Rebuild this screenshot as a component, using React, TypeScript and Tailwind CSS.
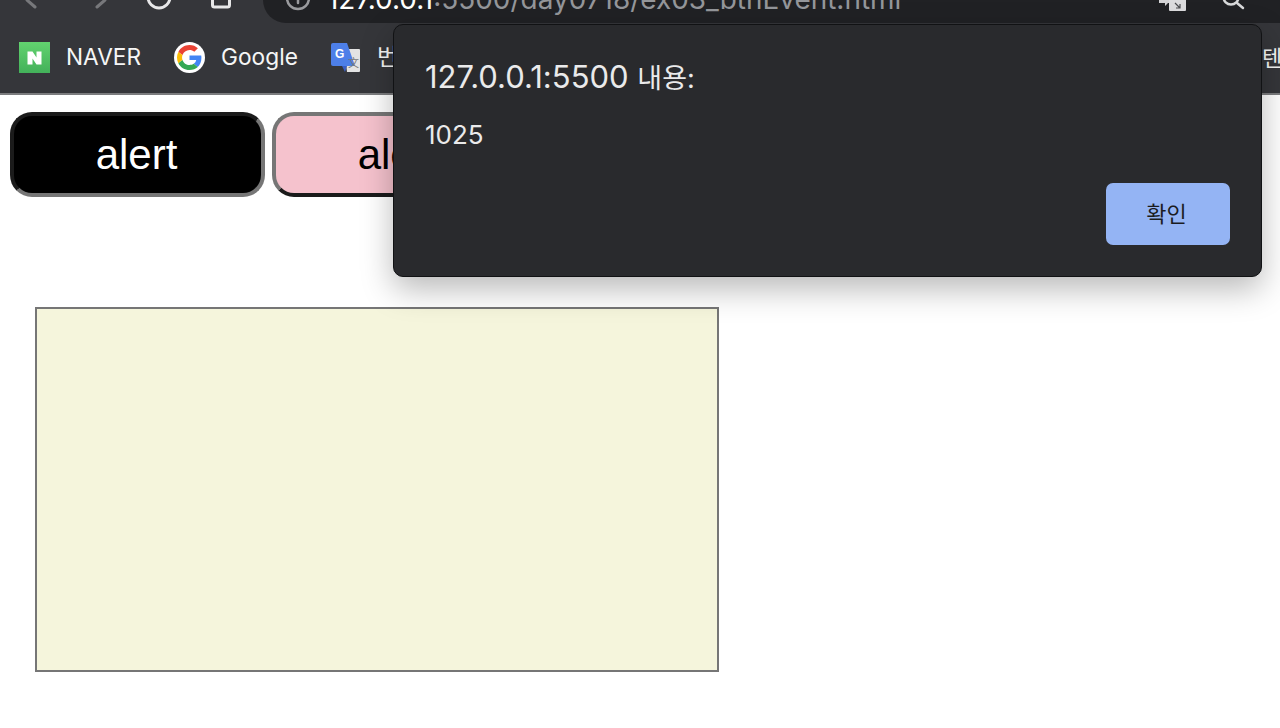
import React from "react";

function NaverIcon() {
  return (
    <div className="flex h-[31px] w-[31px] shrink-0 items-center justify-center bg-gradient-to-b from-[#62d36f] to-[#43b15a]">
      <svg width="15" height="14" viewBox="0 0 15 14">
        <path d="M0.5 0.5h5l4 6v-6h5v13h-5l-4-6v6h-5z" fill="#fff" />
      </svg>
    </div>
  );
}

function GoogleIcon() {
  return (
    <div className="flex h-[31px] w-[31px] shrink-0 items-center justify-center rounded-full bg-white">
      <svg width="25" height="25" viewBox="0 0 48 48">
        <path fill="#EA4335" d="M24 9.5c3.5 0 6.7 1.2 9.2 3.600l6.900-6.900C35.900 2.400 30.500 0 24 0 14.600 0 6.500 5.400 2.600 13.200l8 6.200C12.500 13.600 17.800 9.500 24 9.500z" />
        <path fill="#4285F4" d="M46.900 24.500c0-1.600-.1-3.100-.4-4.500H24v9h12.900c-.6 3-2.200 5.500-4.800 7.200l7.700 6c4.500-4.200 7.100-10.300 7.100-17.700z" />
        <path fill="#FBBC05" d="M10.500 28.600c-.5-1.500-.8-3-.8-4.600s.3-3.100.8-4.600l-8-6.200C.9 16.500 0 20.100 0 24s.9 7.500 2.600 10.800l7.900-6.200z" />
        <path fill="#34A853" d="M24 48c6.500 0 11.900-2.100 15.900-5.800l-7.700-6c-2.200 1.500-4.900 2.300-8.200 2.300-6.200 0-11.500-4.200-13.400-9.800l-8 6.200C6.500 42.600 14.600 48 24 48z" />
      </svg>
    </div>
  );
}

function TranslateIcon() {
  return (
    <svg width="30" height="30" viewBox="0 0 30 30" className="shrink-0">
      <path d="M13 6h15a1 1 0 0 1 1 1v21a1 1 0 0 1-1 1H16z" fill="#e3e3e3" />
      <path d="M2 0h14l8 23H2a2 2 0 0 1-2-2V2a2 2 0 0 1 2-2z" fill="#4d7fe8" />
      <path d="M16 23h-5l3 6z" fill="#3a5fc4" />
      <text x="4" y="15" fontSize="12" fontWeight="700" fill="#fff" fontFamily="Liberation Sans, sans-serif">G</text>
      <text x="17" y="24" fontSize="11" fill="#777" fontFamily="Noto Sans CJK SC, sans-serif">文</text>
    </svg>
  );
}

function Bookmark({ icon, label }: { icon: React.ReactNode; label: string }) {
  return (
    <div className="flex shrink-0 items-center gap-4">
      {icon}
      <span className="text-[22.7px] leading-none text-[#f6f6f6]">{label}</span>
    </div>
  );
}

function NavIcons() {
  // only the lower part of these shows, the window is cut off at the top
  return (
    <svg width="263" height="23" viewBox="0 0 263 23" fill="none" strokeWidth="3" strokeLinecap="round" strokeLinejoin="round" className="shrink-0">
      <path d="M27 0l8 7" stroke="#77787b" />
      <path d="M105 0l-8 7" stroke="#77787b" />
      <circle cx="159" cy="-3" r="11" stroke="#e8e8e9" />
      <path d="M212.500 -6v11a2 2 0 0 0 2 2h13a2 2 0 0 0 2-2v-11" stroke="#e8e8e9" />
    </svg>
  );
}

function Toolbar() {
  return (
    <div className="flex h-[23px] overflow-hidden">
      <NavIcons />
      <div className="flex min-w-0 flex-1 items-start rounded-bl-[24px] bg-[#202124] pl-[22px]">
        <svg width="28" height="23" viewBox="0 0 28 23" fill="none" strokeWidth="2.500" strokeLinecap="round" className="shrink-0">
          <circle cx="13" cy="-2" r="11" stroke="#9a9b9e" />
          <path d="M13 -2v5" stroke="#9a9b9e" />
        </svg>
        <div className="ml-[14px] mt-[-17px] whitespace-nowrap text-[27.95px] leading-[32px]">
          <span className="text-white">127.0.0.1</span>
          <span className="text-[#94969a]">:5500/day0718/ex03_btnEvent.html</span>
        </div>
        <div className="flex-1" />
        <svg width="28" height="12" viewBox="0 0 28 12" className="mr-[34px] shrink-0">
          <path d="M0 0h17v3h-8l-3 3v-3h-6z" fill="#d4d4d6" />
          <path d="M10 0h17v10a1 1 0 0 1-1 1h-15a1 1 0 0 1-1-1z" fill="#dcdcde" />
          <path d="M16 3l5 5M21 4v4h-4" stroke="#4a4b4e" strokeWidth="1.200" fill="none" />
        </svg>
        <svg width="26" height="12" viewBox="0 0 26 12" fill="none" stroke="#d8d9da" strokeWidth="2.500" strokeLinecap="round" className="mr-[33px] shrink-0">
          <circle cx="10" cy="-3" r="7.500" />
          <path d="M16 3l6 5" />
        </svg>
      </div>
    </div>
  );
}

function AlertDialog() {
  return (
    <div className="absolute left-[393px] top-[24px] flex h-[253px] w-[869px] flex-col rounded-[10px] border border-[#111214] bg-[#292a2d] px-[31px] pb-[31px] pt-[36px] shadow-[0_12px_32px_rgba(0,0,0,0.28)]">
      <div className="text-[31px] leading-[32px] text-[#eaeaeb]">
        127.0.0.1:5500 <span className="text-[27px]">내용:</span>
      </div>
      <div className="mt-[24px] text-[26px] leading-[32px] text-[#eaeaeb]">1025</div>
      <div className="mt-auto flex justify-end">
        <button className="h-[62px] w-[124px] rounded-[7px] bg-[#94b4f4] pr-[3px] text-[22px] text-[#1b1c1f]">
          확인
        </button>
      </div>
    </div>
  );
}

export default function App() {
  return (
    <div className="relative h-[728px] w-[1280px] overflow-hidden bg-white font-['Inter','Noto_Sans_CJK_KR',sans-serif]">
      <header className="h-[95px] border-b-2 border-[#7b7c7e] bg-[#35363a]">
        <Toolbar />
        <div className="flex h-[70px] items-center gap-[33px] overflow-hidden pl-[19px] pb-[1px]">
          <Bookmark icon={<NaverIcon />} label="NAVER" />
          <Bookmark icon={<GoogleIcon />} label="Google" />
          <Bookmark icon={<TranslateIcon />} label="번역" />
          <span className="ml-auto w-[18px] shrink-0 overflow-hidden whitespace-nowrap text-[22px] leading-none text-[#f6f6f6]">
            텐
          </span>
        </div>
      </header>

      <main className="px-[10px] pt-[17px]">
        <div className="flex gap-[7px] font-['Liberation_Sans',sans-serif]">
          <button className="h-[85px] w-[255px] rounded-[22px] border-4 border-t-[#1b1b1b] border-r-[#767676] border-b-[#767676] border-l-[#1b1b1b] bg-black pr-[2px] text-[42px] text-white">
            alert
          </button>
          <button className="h-[85px] w-[255px] rounded-[22px] border-4 border-t-[#767676] border-r-[#1b1b1b] border-b-[#1b1b1b] border-l-[#767676] bg-[#f5c2cd] pr-[2px] text-[42px] text-black">
            alert
          </button>
        </div>
        <div className="ml-[25px] mt-[110px] h-[365px] w-[684px] border-2 border-[#767676] bg-[#f5f5dc]" />
      </main>

      <AlertDialog />
    </div>
  );
}
